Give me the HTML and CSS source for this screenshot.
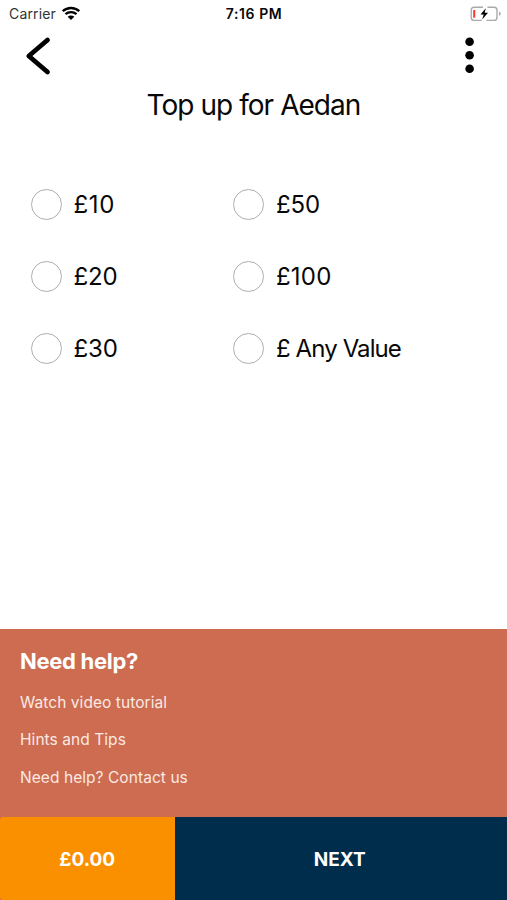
FILE: index.html
```html
<!DOCTYPE html>
<html lang="en">
<head>
<meta charset="utf-8">
<title>Top up</title>
<link rel="stylesheet" href="styles.css">
</head>
<body>
<div class="screen">
  <div class="status">
    <div class="carrier"><span class="carrier-name">Carrier</span>
      <svg class="wifi" width="20" height="15" viewBox="0 0 20 15"><path d="M1.7 5.2C6.4.9 13.6.9 18.3 5.2M4.5 8.2c3.1-2.8 7.9-2.8 11 0" fill="none" stroke="#000" stroke-width="2.3"/><path d="M6.7 10.7c1.9-1.7 4.7-1.7 6.6 0L10 14z"/></svg>
    </div>
    <span class="time">7:16 PM</span>
    <svg class="battery" width="32" height="16" viewBox="0 0 32 16"><path d="M13 1.2H4.2Q1.2 1.2 1.2 4.2v7.2q0 3 3 3h7.6M17.5 1.2H24q3 0 3 3v7.2q0 3-3 3h-7.5" fill="none" stroke="#aaa" stroke-width="1.4"/><path d="M29 5.5q1.8 1 1.8 2.3T29 10.1z" fill="#aaa"/><path d="M3.2 4h2v7.7h-2z" fill="#f33b30"/><path d="M15.8 2.2l-5.3 6.3h3.2l-1.5 5 5.8-6.7h-3.3z"/></svg>
  </div>
  <header class="nav">
    <svg width="26" height="40" viewBox="0 0 26 40"><path d="M22.5 4L3.8 20 22.5 36" fill="none" stroke="#000" stroke-width="4.8" stroke-linecap="round" stroke-linejoin="round"/></svg>
    <svg width="10" height="40" viewBox="0 0 10 40"><circle cx="4.6" cy="5.7" r="4.3"/><circle cx="4.6" cy="19.2" r="4.3"/><circle cx="4.6" cy="32.8" r="4.3"/></svg>
  </header>
  <h1 class="title">Top up for Aedan</h1>
  <main class="options">
    <div class="option"><span class="radio"></span><span class="ten">£10</span></div>
    <div class="option"><span class="radio"></span><span>£50</span></div>
    <div class="option"><span class="radio"></span><span>£20</span></div>
    <div class="option"><span class="radio"></span><span class="hundred">£100</span></div>
    <div class="option"><span class="radio"></span><span>£30</span></div>
    <div class="option"><span class="radio"></span><span class="any">£ Any Value</span></div>
  </main>
  <section class="help">
    <h2 class="help-title">Need help?</h2>
    <a class="link">Watch video tutorial</a>
    <a class="link">Hints and Tips</a>
    <a class="link">Need help? Contact us</a>
  </section>
  <footer class="actions">
    <div class="amount">£0.00</div>
    <div class="next">NEXT</div>
  </footer>
</div>
</body>
</html>
```
FILE: styles.css
```css
* { box-sizing: border-box; }
body { margin: 0; background: #fff; color: #080808; font-family: Inter, "Liberation Sans", sans-serif; }
.screen { width: 507px; height: 900px; display: flex; flex-direction: column; overflow: hidden; }
svg { display: block; flex: none; }
.status { height: 28px; padding: 0 5px 0 9px; display: grid; grid-template-columns: 1fr auto 1fr; align-items: center; font-size: 14px; line-height: 28px; }
.carrier { display: flex; align-items: center; gap: 5px; }
.carrier-name { color: #333; letter-spacing: 0.15px; }
.wifi { margin-top: -2px; }
.time { font-weight: 600; letter-spacing: 0.6px; margin-right: 3px; }
.battery { justify-self: end; margin-top: -1px; }
.nav { height: 56px; padding: 8px 32px 0 25px; display: flex; justify-content: space-between; align-items: flex-start; }
.title { height: 42px; margin: 0; text-align: center; font-size: 28px; font-weight: 400; line-height: 42px; letter-spacing: -0.95px; }
.options { margin: 42px 0 0 30.5px; display: grid; grid-template-columns: 202.5px 1fr; grid-auto-rows: 72px; }
.option { display: flex; align-items: center; gap: 12px; font-size: 24px; line-height: 74px; height: 73px; letter-spacing: -0.1px; }
.ten { letter-spacing: 0.7px; }
.hundred { letter-spacing: 0.2px; }
.any { letter-spacing: -0.9px; }
.radio { width: 31px; height: 31px; border: 1.5px solid #aeaeae; border-radius: 50%; }
.help { margin-top: auto; height: 187.5px; padding: 12px 20px 0; background: #cd6c51; color: #fff; }
.help-title { margin: 0; font-size: 22px; font-weight: 700; line-height: 40px; height: 42.5px; letter-spacing: -0.3px; }
.link { display: block; width: max-content; height: 37.5px; font-size: 15.5px; line-height: 38px; letter-spacing: 0.06px; color: #fbe9e2; }
.actions { height: 83.5px; display: flex; background: #cd6c51; color: #fff; font-size: 19px; font-weight: 700; line-height: 85px; text-align: center; }
.amount { width: 174.5px; background: #fa9000; border-radius: 3px 0 0 3px; }
.next { flex: 1; padding-right: 2px; background: #002d4c; }
```
